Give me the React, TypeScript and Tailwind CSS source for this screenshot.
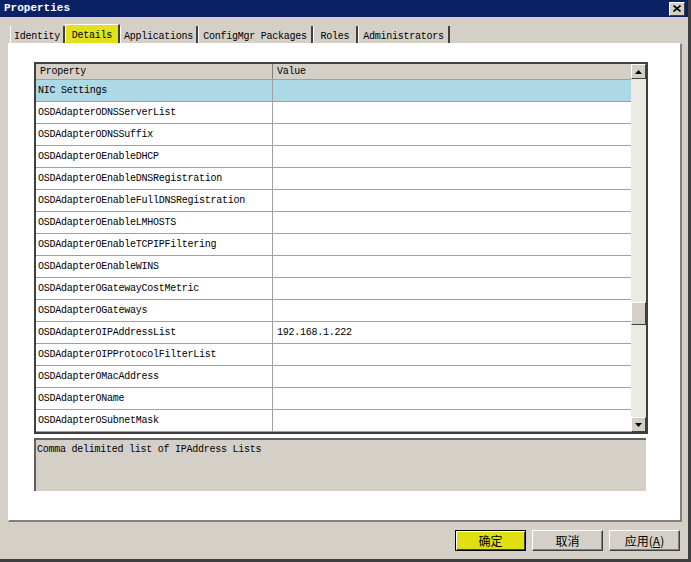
import React from "react";

const rows: { name: string; value?: string }[] = [
  { name: "OSDAdapterODNSServerList" },
  { name: "OSDAdapterODNSSuffix" },
  { name: "OSDAdapterOEnableDHCP" },
  { name: "OSDAdapterOEnableDNSRegistration" },
  { name: "OSDAdapterOEnableFullDNSRegistration" },
  { name: "OSDAdapterOEnableLMHOSTS" },
  { name: "OSDAdapterOEnableTCPIPFiltering" },
  { name: "OSDAdapterOEnableWINS" },
  { name: "OSDAdapterOGatewayCostMetric" },
  { name: "OSDAdapterOGateways" },
  { name: "OSDAdapterOIPAddressList", value: "192.168.1.222" },
  { name: "OSDAdapterOIPProtocolFilterList" },
  { name: "OSDAdapterOMacAddress" },
  { name: "OSDAdapterOName" },
  { name: "OSDAdapterOSubnetMask" },
];

const tabs = [
  { label: "Identity", w: "w-[55px]" },
  { label: "Details", w: "w-[55px]", active: true },
  { label: "Applications", w: "w-[78px]" },
  { label: "ConfigMgr Packages", w: "w-[115px]" },
  { label: "Roles", w: "w-[45px]" },
  { label: "Administrators", w: "w-[92px]" },
];

const mono = "font-['Liberation_Mono',monospace] text-[10px] tracking-[-0.25px] text-black";

const Arrow = ({ up }: { up?: boolean }) => (
  <div className="w-[15px] h-[15px] bg-[#d4d0c8] border border-t-white border-l-white border-r-[#404040] border-b-[#404040] flex items-center justify-center">
    <svg width="7" height="4" viewBox="0 0 7 4">
      {up ? <polygon points="0,4 7,4 3.5,0" fill="#000" /> : <polygon points="0,0 7,0 3.5,4" fill="#000" />}
    </svg>
  </div>
);

const Button = ({ children, primary }: { children: React.ReactNode; primary?: boolean }) => (
  <div
    className={`w-[71px] h-[21px] flex items-center justify-center text-[12px] font-['Noto_Sans_CJK_SC',sans-serif] text-black ${
      primary
        ? "bg-[#e0e010] border border-black shadow-[inset_1px_1px_0_#fff,inset_-1px_-1px_0_#404040]"
        : "bg-[#d4d0c8] border border-t-white border-l-white border-r-[#404040] border-b-[#404040] shadow-[inset_-1px_-1px_0_#808080]"
    }`}
  >
    {children}
  </div>
);

export default function App() {
  return (
    <div className="w-[691px] h-[562px] bg-[#d4d0c8] overflow-hidden flex flex-col border-r-[3px] border-b-[3px] border-r-[#404040] border-b-[#404040]">
      {/* title bar */}
      <div className="h-[17px] bg-[#0b2166] flex items-center justify-between pl-[4px] pr-[3px]">
        <span className="font-['Liberation_Mono',monospace] text-[11px] font-bold text-white">Properties</span>
        <div className="w-[16px] h-[14px] bg-[#d4d0c8] border border-t-white border-l-white border-r-[#404040] border-b-[#404040] flex items-center justify-center">
          <svg width="8" height="7" viewBox="0 0 8 7">
            <path d="M0.5 0.5 L7.5 6.5 M7.5 0.5 L0.5 6.5" stroke="#000" strokeWidth="1.6" />
          </svg>
        </div>
      </div>

      {/* tabs */}
      <div className="flex items-end pl-[10px] mt-[7px] h-[19px]">
        {tabs.map((t) => (
          <div
            key={t.label}
            className={`${t.w} flex items-center justify-center pt-[3px] border-r-2 border-r-[#404040] border-l border-l-white ${mono} ${
              t.active ? "h-[19px] bg-[#e2e21c] border-t border-t-white" : "h-[17px]"
            }`}
          >
            {t.label}
          </div>
        ))}
      </div>

      {/* panel */}
      <div className="ml-[8px] w-[674px] h-[479px] bg-white border-l border-t border-l-white border-t-white border-r-2 border-b-2 border-r-[#808080] border-b-[#808080] pt-[18px] pl-[25px]">
        {/* grid */}
        <div className="w-[614px] h-[372px] border-2 border-[#404040] flex overflow-hidden">
          <div className="flex-1 flex flex-col">
            <div className={`h-[16px] shrink-0 bg-[#d4d0c8] flex border-b border-[#a0a0a0] ${mono}`}>
              <div className="w-[237px] pl-[4px] flex items-center border-r border-[#808080]">Property</div>
              <div className="flex-1 pl-[4px] flex items-center">Value</div>
            </div>
            <div className={`h-[22px] shrink-0 bg-[#add8e6] flex border-b border-[#a0a0a0] ${mono}`}>
              <div className="w-[237px] pl-[2px] flex items-center border-r border-[#a0a0a0]">NIC Settings</div>
              <div className="flex-1" />
            </div>
            {rows.map((r) => (
              <div key={r.name} className={`h-[22px] flex border-b border-[#a0a0a0] shrink-0 ${mono}`}>
                <div className="w-[237px] pl-[2px] flex items-center border-r border-[#a0a0a0]">{r.name}</div>
                <div className="flex-1 pl-[4px] flex items-center">{r.value}</div>
              </div>
            ))}
            <div className="h-[4px] flex shrink-0">
              <div className="w-[237px] border-r border-[#a0a0a0]" />
            </div>
          </div>
          {/* scrollbar */}
          <div className="w-[15px] flex flex-col bg-[#eceae5]">
            <Arrow up />
            <div className="flex-1 relative">
              <div className="absolute left-0 top-[223px] w-[15px] h-[23px] bg-[#d4d0c8] border border-t-white border-l-white border-r-[#404040] border-b-[#404040]" />
            </div>
            <Arrow />
          </div>
        </div>

        {/* description */}
        <div className={`mt-[4px] w-[612px] h-[53px] bg-[#d4d0c8] border-t-2 border-l-2 border-t-[#606060] border-l-[#606060] pl-[1px] pt-[2px] ${mono}`}>
          Comma delimited list of IPAddress Lists
        </div>
      </div>

      {/* buttons */}
      <div className="flex justify-end gap-[6px] pr-[8px] mt-[8px]">
        <Button primary>确定</Button>
        <Button>取消</Button>
        <Button>
          应用(<span className="underline">A</span>)
        </Button>
      </div>
    </div>
  );
}
